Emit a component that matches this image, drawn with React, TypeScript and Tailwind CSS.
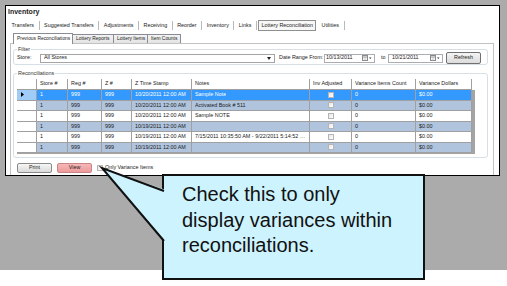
import React from "react";

const cols =
  "grid grid-cols-[20px_31px_34px_30px_60px_118px_42px_64px_56px]";

const headers = [
  "",
  "Store #",
  "Reg #",
  "Z #",
  "Z Time Stamp",
  "Notes",
  "Inv Adjusted",
  "Variance Items Count",
  "Variance Dollars",
];

const rows = [
  { date: "10/20/2011 12:00 AM", note: "Sample Note" },
  { date: "10/20/2011 12:00 AM", note: "Activated Book # 511" },
  { date: "10/20/2011 12:00 AM", note: "Sample NOTE" },
  { date: "10/19/2011 12:00 AM", note: "" },
  { date: "10/19/2011 12:00 AM", note: "7/15/2011 10:35:50 AM - 9/22/2011 5:14:52 PM" },
  { date: "10/19/2011 12:00 AM", note: "" },
];

const mainTabs = [
  "Transfers",
  "Suggested Transfers",
  "Adjustments",
  "Receiving",
  "Reorder",
  "Inventory",
  "Links",
];

function CalendarIcon() {
  return (
    <svg width="10" height="7" viewBox="0 0 10 7" className="shrink-0">
      <rect x="0.5" y="0.5" width="5" height="5" fill="#f4f4f4" stroke="#8a8a8a" />
      <line x1="0.5" y1="2" x2="5.5" y2="2" stroke="#8a8a8a" strokeWidth="0.8" />
      <line x1="3" y1="2" x2="3" y2="5.5" stroke="#b0b0b0" strokeWidth="0.6" />
      <path d="M7 2.5 L9.5 2.5 L8.25 4 Z" fill="#333" />
    </svg>
  );
}

function DateBox({ value, wide }: { value: string; wide?: boolean }) {
  return (
    <div
      className={
        wide
          ? "w-[55px] h-[9px] border border-[#abadb3] bg-white flex items-center pl-[3px] pr-[2px] justify-between"
          : "w-[51px] h-[9px] border border-[#abadb3] bg-white flex items-center pl-[1px] pr-[2px] justify-between"
      }
    >
      <span>{value}</span>
      <CalendarIcon />
    </div>
  );
}

function Check() {
  return (
    <div className="w-[6px] h-[6px] border border-[#b5b5b5] bg-gradient-to-br from-[#e6e6e6] to-white" />
  );
}

export default function App() {
  return (
    <div className="relative w-[507px] h-[286px] overflow-hidden bg-white font-['Liberation_Sans',Arial,sans-serif] text-[5.4px] leading-none text-[#222]">
      <div className="h-[270px] bg-[#ababab] pt-[5px] pl-[5px]">
        <div className="w-[495px] h-[171px] border border-black bg-white flex flex-col">
          <div className="h-[13px] pl-[2px] pt-[1px] text-[7px] font-bold leading-[9px] text-[#1e1e1e]">
            Inventory
          </div>

          {/* main tab strip */}
          <div className="h-[13px] flex items-center pl-[1px] whitespace-nowrap">
            {mainTabs.map((t) => (
              <React.Fragment key={t}>
                <span className="px-[4.5px]">{t}</span>
                <span className="w-px h-[9px] bg-[#b9b9b9]" />
              </React.Fragment>
            ))}
            <span className="ml-[1px] h-[11px] px-[2.5px] flex items-center border border-[#8e8f8f] bg-[#f7f7f7]">
              Lottery Reconciliation
            </span>
            <span className="px-[5px]">Utilities</span>
            <span className="w-px h-[9px] bg-[#b9b9b9]" />
          </div>

          {/* tab control */}
          <div className="ml-[4px] w-[484px] flex-1 flex flex-col">
            <div className="h-[11px] flex items-end pl-[3px] whitespace-nowrap text-[4.9px]">
              <div className="h-[11px] w-[60px] border border-b-0 border-[#898c95] bg-white flex items-center pl-[3px] -mb-px relative">
                Previous Reconciliations
              </div>
              <div className="h-[9px] w-[41px] border border-l-0 border-b-0 border-[#898c95] bg-gradient-to-b from-[#f3f3f3] to-[#e3e3e3] flex items-center pl-[3px]">
                Lottery Reports
              </div>
              <div className="h-[9px] w-[34px] border border-l-0 border-b-0 border-[#898c95] bg-gradient-to-b from-[#f3f3f3] to-[#e3e3e3] flex items-center pl-[3px]">
                Lottery Items
              </div>
              <div className="h-[9px] w-[33px] border border-l-0 border-b-0 border-[#898c95] bg-gradient-to-b from-[#f3f3f3] to-[#e3e3e3] flex items-center pl-[3px]">
                Item Counts
              </div>
            </div>

            <div className="flex-1 border border-b-0 border-[#c2c2c2] bg-white flex flex-col">
              {/* filter */}
              <fieldset className="mt-[3px] ml-[2px] w-[475px] border border-[#d5dfe5] rounded-[3px] px-[3px]">
                <legend className="px-px leading-[5px] text-[#333]">Filter</legend>
                <div className="h-[12px] flex items-center whitespace-nowrap">
                  <span className="w-[23px]">Store:</span>
                  <div className="w-[235px] h-[9px] border border-[#a5a5a5] bg-white flex items-center justify-between pl-[3px] pr-[3px]">
                    <span>All Stores</span>
                    <svg width="4" height="3" viewBox="0 0 4 3">
                      <path d="M0 0 L4 0 L2 3 Z" fill="#222" />
                    </svg>
                  </div>
                  <span className="ml-[4px] w-[45px]">Date Range From:</span>
                  <DateBox value="10/13/2011" />
                  <span className="ml-[6px] w-[7px]">to</span>
                  <DateBox value="10/21/2011" wide />
                  <button className="ml-[3px] w-[35px] h-[12px] border border-[#707070] rounded-[2px] bg-gradient-to-b from-[#f4f4f4] to-[#dcdcdc] text-[5.4px] leading-none">
                    Refresh
                  </button>
                </div>
              </fieldset>

              {/* reconciliations */}
              <fieldset className="mt-[5px] ml-[2px] w-[475px] border border-[#d5dfe5] rounded-[3px] px-[3px] pb-[3px]">
                <legend className="px-px leading-[6px] text-[#333]">Reconciliations</legend>
                <div className="mt-[3px] w-[458px] h-[75px] bg-[#a4a4a4] overflow-hidden">
                  <div className={`${cols} h-[11px] bg-white`}>
                    {headers.map((h, i) => (
                      <div
                        key={i}
                        className="border-r border-b border-[#a0a0a0] flex items-center pl-[3px] whitespace-nowrap overflow-hidden"
                      >
                        {h}
                      </div>
                    ))}
                  </div>
                  {rows.map((r, i) => {
                    const sel = i === 0;
                    const rowCls = sel
                      ? "bg-[#3399ff] text-white"
                      : i % 2 === 1
                      ? "bg-[#b0c4de] text-[#1c1c1c]"
                      : "bg-white text-[#1c1c1c]";
                    return (
                      <div key={i} className={`${cols} h-[10.5px]`}>
                        <div
                          className={
                            sel
                              ? "bg-[#9fcdf7] border-r border-b border-[#a0a0a0] flex items-center pl-[4px]"
                              : "bg-white border-r border-b border-[#a0a0a0]"
                          }
                        >
                          {sel && (
                            <svg width="3" height="5" viewBox="0 0 3 5">
                              <path d="M0 0 L3 2.5 L0 5 Z" fill="#000" />
                            </svg>
                          )}
                        </div>
                        <div className={`${rowCls} border-r border-b border-[#a0a0a0] flex items-center pl-[3px]`}>1</div>
                        <div className={`${rowCls} border-r border-b border-[#a0a0a0] flex items-center pl-[3px]`}>999</div>
                        <div className={`${rowCls} border-r border-b border-[#a0a0a0] flex items-center pl-[3px]`}>999</div>
                        <div className={`${rowCls} border-r border-b border-[#a0a0a0] flex items-center pl-[3px] whitespace-nowrap`}>
                          {r.date}
                        </div>
                        <div className={`${rowCls} border-r border-b border-[#a0a0a0] flex items-center pl-[3px] pr-[2px] min-w-0`}>
                          <span className="truncate">{r.note}</span>
                        </div>
                        <div className={`${rowCls} border-r border-b border-[#a0a0a0] flex items-center justify-center`}>
                          <Check />
                        </div>
                        <div className={`${rowCls} border-r border-b border-[#a0a0a0] flex items-center pl-[3px]`}>0</div>
                        <div className={`${rowCls} border-r border-b border-[#a0a0a0] flex items-center pl-[3px]`}>$0.00</div>
                      </div>
                    );
                  })}
                </div>
              </fieldset>

              {/* buttons */}
              <div className="mt-[5px] ml-[6px] h-[10px] flex items-center whitespace-nowrap">
                <button className="w-[35px] h-[10px] border border-[#8a8a8a] rounded-[2px] bg-gradient-to-b from-[#f6f6f6] to-[#dadada] text-[5.4px] leading-none">
                  Print
                </button>
                <button className="ml-[5px] w-[35px] h-[10px] border border-[#c98585] rounded-[2px] bg-gradient-to-b from-[#f7b7b7] to-[#ec9a9a] text-[5.4px] leading-none">
                  View
                </button>
                <div className="ml-[5px]">
                  <Check />
                </div>
                <span className="ml-[2px]">Only Variance Items</span>
              </div>
            </div>
          </div>
        </div>
      </div>

      {/* callout */}
      <div className="absolute left-[162px] top-[174px] w-[263px] h-[106px] border-2 border-[#111] bg-[#cdf3fe] pl-[18px] pt-[6px] text-[20px] leading-[25.5px] text-[#111]">
        <div>Check this to only</div>
        <div>display variances within</div>
        <div>reconciliations.</div>
      </div>
      <svg
        className="absolute left-0 top-0 pointer-events-none"
        width="507"
        height="286"
        viewBox="0 0 507 286"
      >
        <polygon points="102,168 166,190 166,242" fill="#cdf3fe" />
        <polyline points="164,191 102,168 164,241" fill="none" stroke="#111" strokeWidth="2" />
      </svg>
    </div>
  );
}
